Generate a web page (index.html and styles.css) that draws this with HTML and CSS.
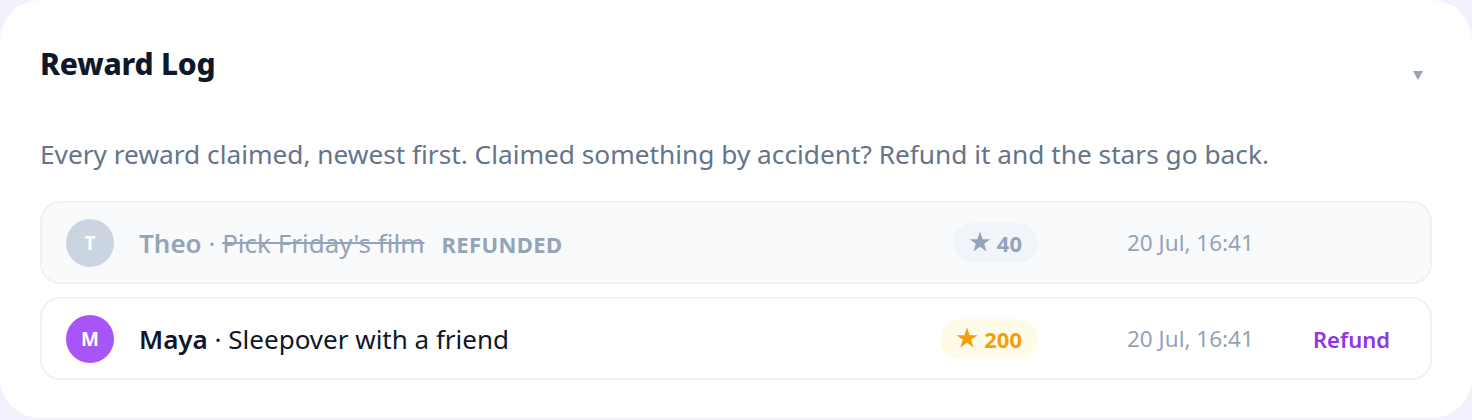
FILE: index.html
```html
<!DOCTYPE html>
<html>
<head>
<meta charset="utf-8">
<link rel="stylesheet" href="styles.css">
</head>
<body>
<section class="card">
  <header class="card-head">
    <h2 class="title">Reward Log</h2>
    <span class="caret"></span>
  </header>
  <p class="desc">Every reward claimed, newest first. Claimed something by accident? Refund it and the stars go back.</p>
  <ul class="log">
    <li class="entry refunded">
      <span class="avatar avatar-theo">T</span>
      <span class="what"><b class="name">Theo</b> · <s class="reward">Pick Friday's film</s><span class="tag">REFUNDED</span></span>
      <span class="pill pill-muted"><svg class="star" viewBox="0 0 24 23" aria-hidden="true"><path d="M12 0.5l2.9 8.4h8.6l-7 5.2 2.7 8.4-7.2-5.2-7.2 5.2 2.7-8.4-7-5.2h8.6z" fill="currentColor"/></svg>40</span>
      <span class="date">20 Jul, 16:41</span>
      <span class="action"></span>
    </li>
    <li class="entry">
      <span class="avatar avatar-maya">M</span>
      <span class="what"><b class="name">Maya</b> · <span class="reward">Sleepover with a friend</span></span>
      <span class="pill pill-gold"><svg class="star" viewBox="0 0 24 23" aria-hidden="true"><path d="M12 0.5l2.9 8.4h8.6l-7 5.2 2.7 8.4-7.2-5.2-7.2 5.2 2.7-8.4-7-5.2h8.6z" fill="currentColor"/></svg>200</span>
      <span class="date">20 Jul, 16:41</span>
      <span class="action"><button class="refund">Refund</button></span>
    </li>
  </ul>
</section>
</body>
</html>
```
FILE: styles.css
```css
* { box-sizing: border-box; }
html, body { margin: 0; padding: 0; }
body {
  background: #f1f0fd;
  font-family: "Noto Sans", "Open Sans", sans-serif;
  width: 1472px;
  height: 420px;
  overflow: hidden;
}
.card {
  background: #ffffff;
  border-radius: 40px;
  height: 418px;
  padding: 40px 40px 0 40px;
}
.card-head {
  display: flex;
  align-items: flex-start;
  justify-content: space-between;
  height: 48px;
}
.title {
  margin: 0;
  font-size: 30px;
  line-height: 48px;
  font-weight: 800;
  color: #0f172a;
  letter-spacing: -0.2px;
}
.caret {
  width: 0;
  height: 0;
  border-left: 5px solid transparent;
  border-right: 5px solid transparent;
  border-top: 9px solid #94a3b8;
  margin-top: 31px;
  margin-right: 9px;
}
.desc {
  margin: 48px 0 0 0;
  font-size: 26.25px;
  color: #64748b;
  line-height: 36px;
  white-space: nowrap;
}
.log {
  list-style: none;
  margin: 29px 0 0 0;
  padding: 0;
  display: flex;
  flex-direction: column;
  gap: 13px;
}
.entry {
  display: flex;
  align-items: center;
  height: 83px;
  padding: 0 24px;
  border: 2px solid #f1f0fd;
  border-radius: 20px;
  background: #ffffff;
}
.entry.refunded {
  background: #f8fafc;
  border-color: #eef2f7;
}
.avatar {
  width: 48px;
  height: 48px;
  border-radius: 50%;
  flex: none;
  display: flex;
  align-items: center;
  justify-content: center;
  color: #ffffff;
  font-weight: 700;
  font-size: 19px;
}
.avatar-theo { background: #cbd5e1; }
.avatar-maya { background: #a855f7; }
.what {
  flex: 1;
  margin-left: 25px;
  font-size: 26px;
  color: #0f172a;
  white-space: nowrap;
}
.name { font-weight: 600; }
.refunded .what { color: #94a3b8; }
.tag {
  margin-left: 17px;
  font-size: 22px;
  font-weight: 700;
  letter-spacing: 0.4px;
}
.pill {
  flex: none;
  height: 40px;
  padding: 0 16px;
  border-radius: 20px;
  display: flex;
  align-items: center;
  gap: 6px;
  font-size: 22px;
  font-weight: 700;
}
.star { flex: none; display: block; width: 22px; height: 21px; margin-top: -2px; }
.pill-muted { background: #f1f5f9; color: #94a3b8; }
.pill-gold { background: #fefbe8; color: #f59e0b; }
.date {
  flex: none;
  width: 127px;
  margin-left: 89px;
  font-size: 22.5px;
  color: #94a3b8;
  white-space: nowrap;
}
.action {
  flex: none;
  width: 152px;
  display: flex;
  justify-content: flex-end;
  padding-right: 16px;
}
.refund {
  border: none;
  background: none;
  padding: 0;
  font-family: inherit;
  font-size: 22px;
  font-weight: 600;
  color: #9333ea;
}
```
